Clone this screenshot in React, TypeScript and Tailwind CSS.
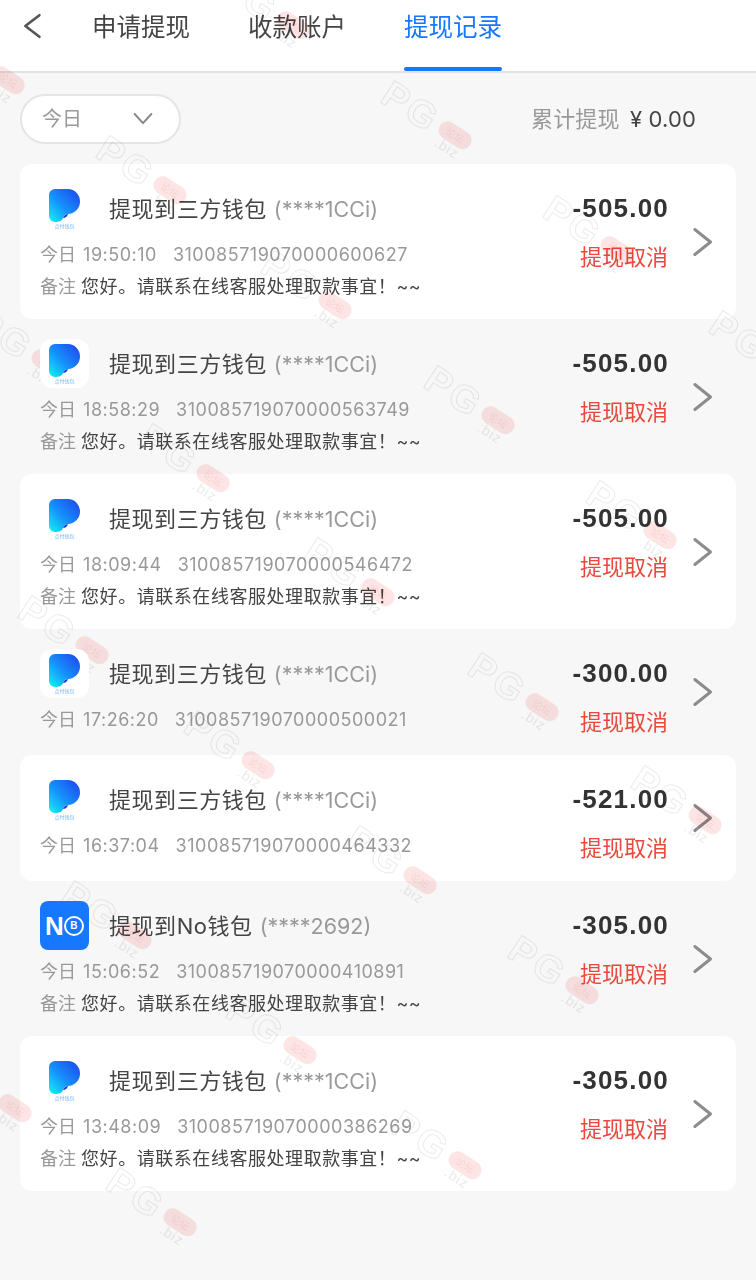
const SANS = "font-['Inter','Noto_Sans_CJK_SC',sans-serif]";

type Wallet = "p" | "no";

interface Withdrawal {
  wallet: Wallet;
  account: string;
  amount: string;
  time: string;
  serial: string;
  note?: boolean;
}

const RECORDS: Withdrawal[] = [
  { wallet: "p", account: "(****1CCi)", amount: "-505.00", time: "19:50:10", serial: "310085719070000600627", note: true },
  { wallet: "p", account: "(****1CCi)", amount: "-505.00", time: "18:58:29", serial: "310085719070000563749", note: true },
  { wallet: "p", account: "(****1CCi)", amount: "-505.00", time: "18:09:44", serial: "310085719070000546472", note: true },
  { wallet: "p", account: "(****1CCi)", amount: "-300.00", time: "17:26:20", serial: "310085719070000500021" },
  { wallet: "p", account: "(****1CCi)", amount: "-521.00", time: "16:37:04", serial: "310085719070000464332" },
  { wallet: "no", account: "(****2692)", amount: "-305.00", time: "15:06:52", serial: "310085719070000410891", note: true },
  { wallet: "p", account: "(****1CCi)", amount: "-305.00", time: "13:48:09", serial: "310085719070000386269", note: true },
];

// rotation origin of each repeated site stamp
const STAMPS = [
  [-55, 25], [230, -30], [392, 80], [107, 135], [554, 195], [272, 250], [720, 310], [-15, 308],
  [435, 365], [150, 423], [597, 480], [315, 537], [29, 595], [479, 652], [195, 710], [642, 765],
  [357, 825], [72, 880], [519, 935], [237, 995], [-48, 1053], [402, 1110], [117, 1167],
];

function PLogo() {
  return (
    <div className="relative z-10 h-[49px] w-[49px] shrink-0 rounded-xl bg-white">
      <svg viewBox="0 0 49 49" className="h-full w-full">
        <defs>
          <linearGradient id="p-fill" x1="0.95" y1="0.1" x2="0.1" y2="0.95">
            <stop offset="0" stopColor="#1f4df0" />
            <stop offset="0.55" stopColor="#1590fb" />
            <stop offset="1" stopColor="#0fe6f2" />
          </linearGradient>
        </defs>
        <path
          d="M15 5H28A12 12.5 0 0 1 28 30C25 30 24 31 23 34C22 37 19 38 15 38A6 6 0 0 1 9 32V11A6 6 0 0 1 15 5Z"
          fill="url(#p-fill)"
        />
        <path d="M23 34C24 31 26 30 28 30C27 33 25 34 23 34Z" fill="#1b3fd8" />
        <text x="24.5" y="43.5" textAnchor="middle" fontSize="5" fill="#6fb4f5" fontFamily="'Noto Sans CJK SC', sans-serif">
          点付钱包
        </text>
      </svg>
    </div>
  );
}

function NoLogo() {
  return (
    <div className="relative z-10 flex h-[49px] w-[49px] shrink-0 items-center justify-center rounded-lg bg-[#1677ff] text-white">
      <span className="font-['Liberation_Sans',sans-serif] text-[26px] font-bold leading-none">N</span>
      <span className="flex h-5 w-5 items-center justify-center rounded-full border-2 border-white font-['Liberation_Sans',sans-serif] text-[10px] font-bold leading-none">
        B
      </span>
    </div>
  );
}

function Chevron({ points, className }: { points: string; className: string }) {
  return (
    <svg viewBox="0 0 24 24" fill="none" stroke="currentColor" strokeWidth="2.4" strokeLinecap="round" strokeLinejoin="round" className={className}>
      <polyline points={points} />
    </svg>
  );
}

function RecordRow({ record, striped }: { record: Withdrawal; striped: boolean }) {
  return (
    <div className={`flex items-center rounded-xl pl-5 pr-[18px] ${record.note ? "h-[155px]" : "h-[126px]"} ${striped ? "bg-white" : ""}`}>
      <div className="flex h-full min-w-0 flex-1 flex-col pt-5">
        <div className="flex h-[49px] items-center">
          {record.wallet === "p" ? <PLogo /> : <NoLogo />}
          <p className="ml-5 mt-0.5 text-[22px] leading-none tracking-[0.55px] text-[#444]">
            {record.wallet === "p" ? "提现到三方钱包" : "提现到No钱包"}
            <span className="ml-[7px] text-[21.5px] tracking-normal text-[#999]">{record.account}</span>
          </p>
        </div>
        <p className="mt-[9px] whitespace-nowrap text-[18px] leading-[26px] text-[#999]">
          今日 <span className="ml-0.5 tracking-[0.5px]">{record.time}</span>
          <span className="ml-4 tracking-[0.5px]">{record.serial}</span>
        </p>
        {record.note && (
          <p className="mt-[6px] whitespace-nowrap text-[18px] leading-[26px] text-[#999]">
            备注 <span className="tracking-[0.55px] text-[#444]">您好。请联系在线客服处理取款事宜！~~</span>
          </p>
        )}
      </div>
      <div className="flex h-full shrink-0 flex-col items-end pt-[28px]">
        <p className="-mr-px font-['Liberation_Sans',sans-serif] text-[26px] font-bold leading-8 tracking-[1.2px] text-[#333]">
          {record.amount}
        </p>
        <p className="mt-[17px] text-[22px] leading-8 text-[#e8493c]">提现取消</p>
      </div>
      <Chevron points="5.5 2 18 12 5.5 22" className="ml-5 h-[30px] w-[30px] text-[#8c8c8c]" />
    </div>
  );
}

// faint "PG" mark with its red forum pill, repeated over the page
function Stamp({ x, y }: { x: number; y: number }) {
  return (
    <div
      className="pointer-events-none absolute flex h-6 origin-top-left rotate-[33deg] items-center gap-[5px] mix-blend-multiply"
      style={{ left: x, top: y }}
    >
      <span className="w-[60px] font-['Liberation_Sans',sans-serif] text-[38px] font-bold leading-none tracking-[3px] text-transparent [-webkit-text-stroke:1px_#ececec]">
        PG
      </span>
      <span className="flex h-[18px] w-9 items-center justify-center rounded-full bg-[#fde5e5] text-[10px] leading-none text-[#f9d3d3]">
        论坛
      </span>
      <span className="absolute left-[70px] top-5 font-['Liberation_Sans',sans-serif] text-[14px] leading-none tracking-[1px] text-[#ebebeb]">
        .biz
      </span>
    </div>
  );
}

export default function App() {
  return (
    <div className={`relative h-[1280px] overflow-hidden bg-[#f7f7f7] ${SANS}`}>
      <header className="flex h-[73px] items-start border-b-2 border-[#e2e2e2] bg-white">
        <Chevron points="17 2 4 12 17 22" className="ml-[21px] mt-[13px] h-[26px] w-[26px] text-[#555]" />
        <nav className="ml-[45px] flex gap-[58px] text-[24.5px] leading-none">
          <span className="pt-[15px] text-[#444]">申请提现</span>
          <span className="pt-[15px] text-[#444]">收款账户</span>
          <span className="flex h-[71px] w-[98px] flex-col justify-between pt-[15px] text-[#1677ff]">
            提现记录
            <span className="h-1 rounded-sm bg-[#1677ff]" />
          </span>
        </nav>
      </header>

      <div className="flex h-[91px] items-center justify-between pl-5 pr-[60px]">
        <div className="flex h-[50px] w-[161px] items-center justify-between rounded-full border-2 border-[#e5e5e5] bg-white pl-5 pr-6">
          <span className="mt-px text-[20px] text-[#999]">今日</span>
          <Chevron points="2 6 12 17 22 6" className="h-5 w-6 text-[#888]" />
        </div>
        <p className="mt-0.5 text-[22px] tracking-[0.15px] text-[#999]">
          累计提现 <span className="ml-1 text-[#444]">¥ 0.00</span>
        </p>
      </div>

      <div className="mx-5 flex flex-col">
        {RECORDS.map((record, index) => (
          <RecordRow key={record.serial} record={record} striped={index % 2 === 0} />
        ))}
      </div>

      {STAMPS.map(([x, y]) => (
        <Stamp key={`${x}-${y}`} x={x} y={y} />
      ))}
    </div>
  );
}
